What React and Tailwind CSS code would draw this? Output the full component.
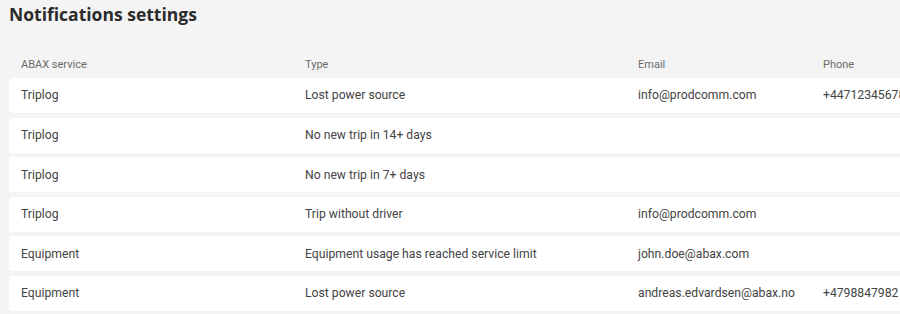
import React from 'react';

const rows = [
  { service: 'Triplog', type: 'Lost power source', email: 'info@prodcomm.com', phone: '+447123456789' },
  { service: 'Triplog', type: 'No new trip in 14+ days', email: '', phone: '' },
  { service: 'Triplog', type: 'No new trip in 7+ days', email: '', phone: '' },
  { service: 'Triplog', type: 'Trip without driver', email: 'info@prodcomm.com', phone: '' },
  { service: 'Equipment', type: 'Equipment usage has reached service limit', email: 'john.doe@abax.com', phone: '' },
  { service: 'Equipment', type: 'Lost power source', email: 'andreas.edvardsen@abax.no', phone: '+4798847982' },
];

const cols = 'grid grid-cols-[284px_333px_185px_200px] items-center';

const App = () => {
  return (
    <div className="w-[900px] h-[314px] overflow-hidden bg-[#f4f4f4] font-['Roboto',sans-serif]">
      <h1 className="pl-[9px] pt-[3px] text-[17.5px] leading-[22px] font-bold text-[#2b2b2b] font-['Open_Sans',sans-serif]">
        Notifications settings
      </h1>
      <div className="pl-[9px] mt-[32px] w-[1020px]">
        <div className={`${cols} px-3 h-[20px] text-[11px] text-[#6b6b6b] -translate-y-[2px]`}>
          <div>ABAX service</div>
          <div>Type</div>
          <div>Email</div>
          <div>Phone</div>
        </div>
        <div className="mt-[1px] flex flex-col gap-[4.6px]">
          {rows.map((r, i) => (
            <div key={i} className={`${cols} px-3 h-[35px] bg-white rounded-[4px] text-[12.2px] text-[#444] whitespace-nowrap`}>
              <div>{r.service}</div>
              <div>{r.type}</div>
              <div>{r.email}</div>
              <div>{r.phone}</div>
            </div>
          ))}
        </div>
      </div>
    </div>
  );
};

export default App;
